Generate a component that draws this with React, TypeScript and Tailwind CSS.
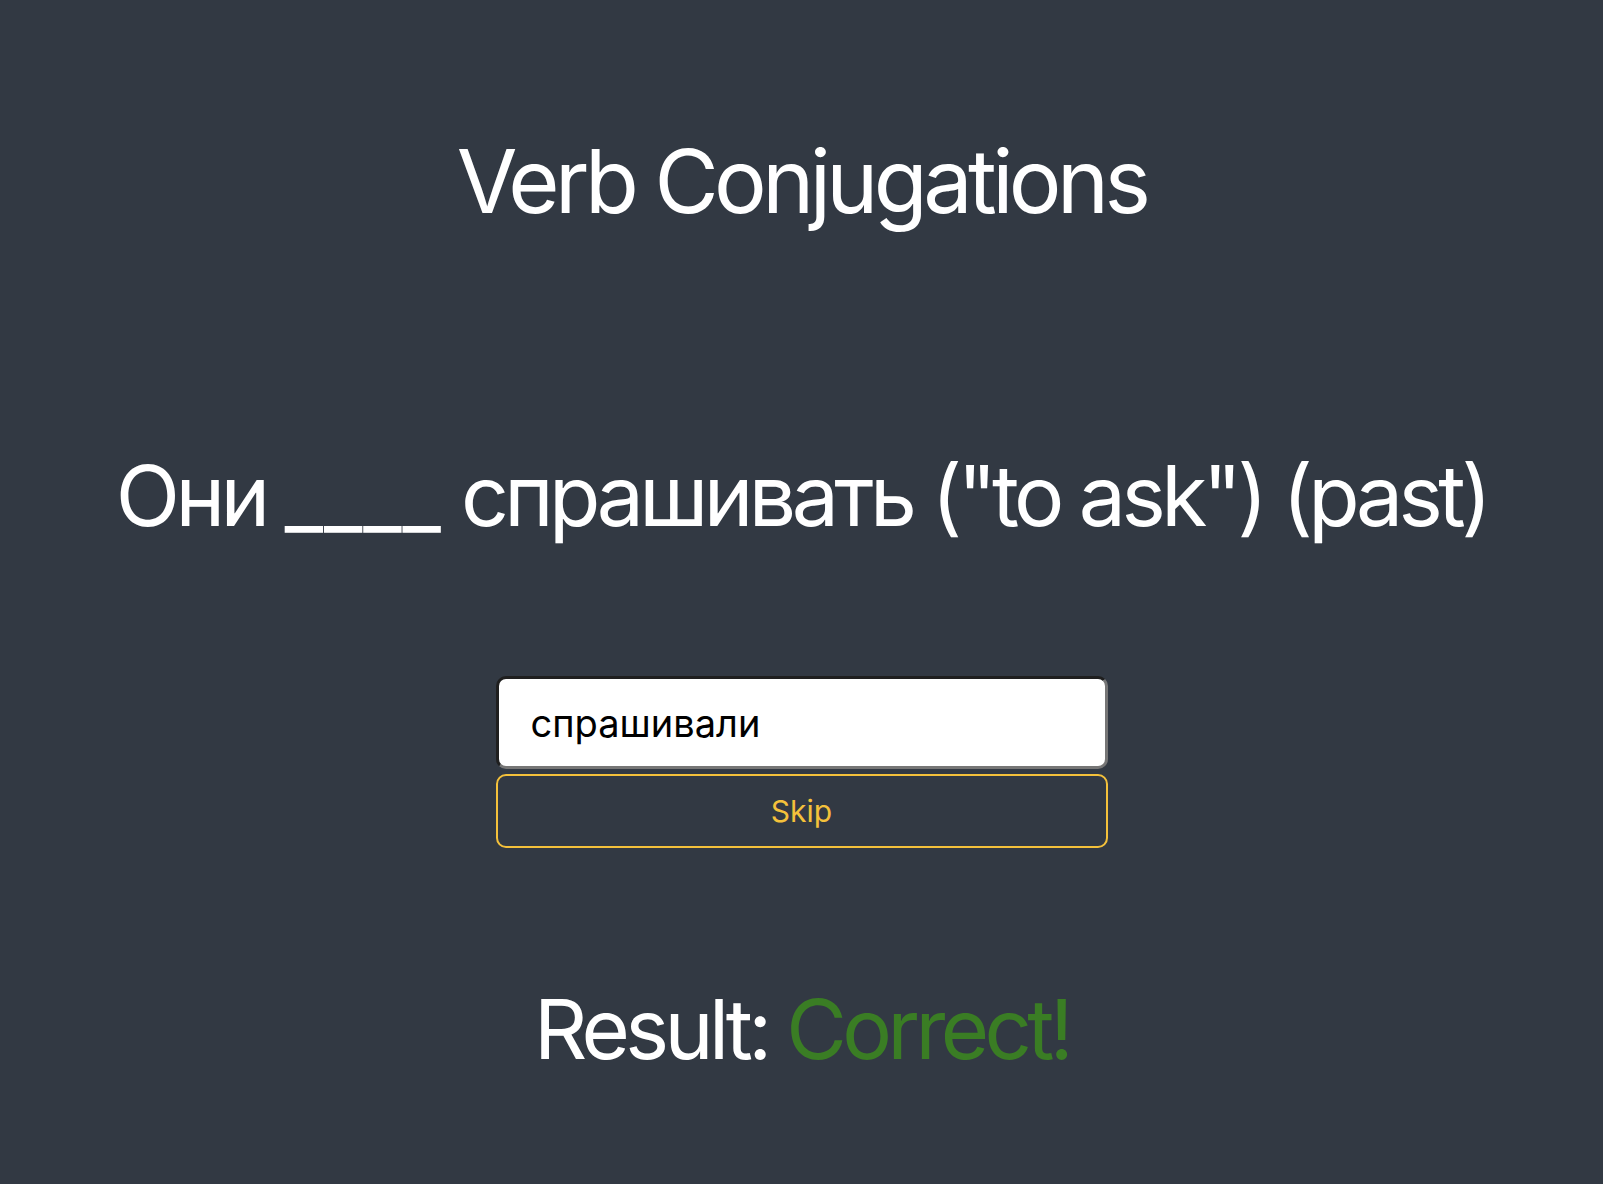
import { useState } from "react";

export default function App() {
  const [answer, setAnswer] = useState("спрашивали");

  return (
    <div className="min-h-screen bg-[#323943] text-white flex flex-col items-center font-['Inter','Noto_Sans',sans-serif]">
      <h1 className="mt-[137px] text-[88px] leading-none font-normal tracking-[-4.6px]">Verb Conjugations</h1>

      <p className="mt-[229px] text-[84px] leading-none font-normal tracking-[-4.6px]">
        Они <span className="tracking-[1px]">____</span> спрашивать ("to ask") (past)
      </p>

      <div className="mt-[138px] w-[612px] flex flex-col gap-[5px]">
        <input
          type="text"
          value={answer}
          onChange={(e) => setAnswer(e.target.value)}
          className="h-[93px] w-full rounded-[10px] bg-white px-[32px] text-[38px] text-black outline-none border-[3px] border-t-[#1f1f1f] border-l-[#1f1f1f] border-r-[#767676] border-b-[#767676]"
        />
        <button className="h-[74px] w-full rounded-[10px] border-2 border-[#f4c13b] text-[#f4c13b] text-[30px]">
          Skip
        </button>
      </div>

      <p className="mt-[140px] text-[83px] leading-none tracking-[-4.6px]">
        Result: <span className="text-[#3a7d24]">Correct!</span>
      </p>
    </div>
  );
}
